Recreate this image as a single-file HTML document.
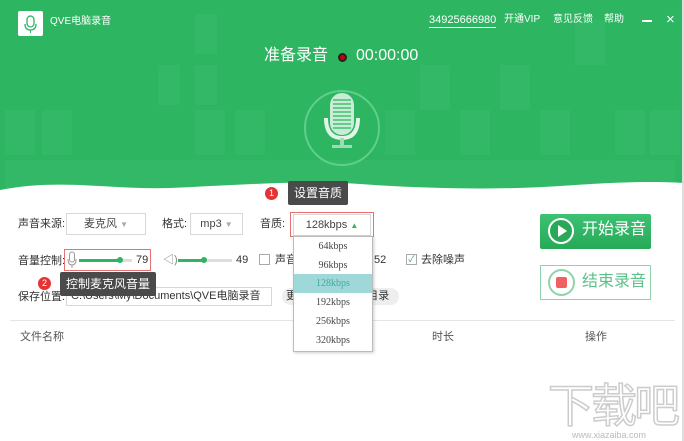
<!DOCTYPE html>
<html><head><meta charset="utf-8"><style>
*{margin:0;padding:0;box-sizing:border-box}
body{width:684px;height:441px;overflow:hidden;background:#fff;font-family:"Liberation Sans","Noto Sans CJK SC",sans-serif;font-size:11px;line-height:1.15;color:#333;position:relative}
.a{position:absolute;white-space:nowrap}
.hdr{left:0;top:0;width:684px;height:200px;background:#2db562;overflow:hidden}
.dd{border:1px solid #d8d8d8;background:#fff;height:22px;line-height:20px;text-align:center;color:#444}
.tip{background:#4a4a4a;color:#fff;font-size:12px;line-height:24px;padding:0 6px;border-radius:2px}
.num{width:13px;height:13px;border-radius:50%;background:#e53333;color:#fff;font-size:9px;text-align:center;line-height:13px}
.li{left:0;width:78px;height:19px;line-height:19px;text-align:center;font-family:"Liberation Serif","DejaVu Serif",serif;font-size:10px;color:#444}
</style></head><body>
<div class="a hdr">
<svg class="a" style="left:0;top:0" width="684" height="200">
<g fill="#3bbd6e" opacity=".4">
<rect x="195" y="14" width="22" height="40"/><rect x="158" y="65" width="22" height="40"/><rect x="195" y="65" width="22" height="40"/>
<rect x="5" y="110" width="30" height="45"/><rect x="42" y="110" width="30" height="45"/><rect x="195" y="110" width="30" height="45"/><rect x="235" y="110" width="30" height="45"/>
<rect x="385" y="110" width="30" height="45"/><rect x="420" y="65" width="30" height="45"/><rect x="460" y="110" width="30" height="45"/><rect x="500" y="65" width="30" height="45"/><rect x="540" y="110" width="30" height="45"/><rect x="575" y="20" width="30" height="45"/><rect x="615" y="110" width="30" height="45"/><rect x="650" y="110" width="30" height="45"/>
<rect x="5" y="160" width="670" height="40"/>
</g>
<path d="M0 200 L0 190 C60 178 110 190 170 188 C240 185 300 180 360 184 C430 189 500 190 560 186 C620 182 650 181 684 183 L684 200Z" fill="#fff"/>
<circle cx="342" cy="128" r="37" fill="none" stroke="#5fcf8d" stroke-width="2"/>
<rect x="330" y="93" width="24" height="42" rx="12" fill="#c8ecd6"/>
<g stroke="#2db562" stroke-width="1.2"><line x1="333" y1="100" x2="351" y2="100"/><line x1="333" y1="104" x2="351" y2="104"/><line x1="333" y1="108" x2="351" y2="108"/><line x1="333" y1="112" x2="351" y2="112"/><line x1="333" y1="116" x2="351" y2="116"/><line x1="333" y1="120" x2="351" y2="120"/><line x1="333" y1="124" x2="351" y2="124"/><line x1="333" y1="128" x2="351" y2="128"/></g>
<path d="M326 118 Q326 138 342 138 Q358 138 358 118" fill="none" stroke="#e0f5e8" stroke-width="4"/>
<rect x="340" y="138" width="4" height="8" fill="#9fdcb6"/><rect x="332" y="145" width="20" height="3" fill="#9fdcb6"/>
</svg>
<div class="a" style="left:18px;top:11px;width:25px;height:25px;background:#fff;border-radius:2px"></div>
<svg class="a" style="left:18px;top:11px" width="25" height="25"><rect x="9" y="5" width="7" height="11" rx="3.5" fill="none" stroke="#2db562" stroke-width="1.3"/><path d="M7 13 Q7 19 12.5 19 Q18 19 18 13" fill="none" stroke="#2db562" stroke-width="1.3"/><line x1="12.5" y1="19" x2="12.5" y2="22" stroke="#2db562"/></svg>
<div class="a" style="left:50px;top:16px;color:#fff;font-size:10px">QVE电脑录音</div>
<div class="a" style="left:429px;top:14px;color:#fff;font-size:11px;border-bottom:1px solid #fff">34925666980</div>
<div class="a" style="left:504px;top:14px;color:#fff;font-size:10px">开通VIP</div>
<div class="a" style="left:553px;top:14px;color:#fff;font-size:10px">意见反馈</div>
<div class="a" style="left:604px;top:14px;color:#fff;font-size:10px">帮助</div>
<div class="a" style="left:642px;top:20px;width:10px;height:2px;background:#fff"></div>
<div class="a" style="left:666px;top:11px;color:#fff;font-size:15px">×</div>
<div class="a" style="left:264px;top:47px;color:#fff;font-size:16px">准备录音</div>
<div class="a" style="left:338px;top:53px;width:9px;height:9px;border-radius:50%;background:#c00;border:2px solid #222"></div>
<div class="a" style="left:356px;top:47px;color:#fff;font-size:16px">00:00:00</div>
</div>
<div class="a num" style="left:265px;top:187px">1</div>
<div class="a tip" style="left:288px;top:181px">设置音质</div>
<div class="a" style="left:18px;top:218px">声音来源:</div>
<div class="a dd" style="left:66px;top:213px;width:80px">麦克风 <span style="color:#aaa;font-size:8px">▼</span></div>
<div class="a" style="left:162px;top:218px">格式:</div>
<div class="a dd" style="left:190px;top:213px;width:53px">mp3 <span style="color:#aaa;font-size:8px">▼</span></div>
<div class="a" style="left:260px;top:218px">音质:</div>
<div class="a" style="left:290px;top:212px;width:84px;height:25px;border:1px solid #e87070"></div>
<div class="a dd" style="left:293px;top:214px;width:78px">128kbps <span style="color:#2db562;font-size:8px">▲</span></div>
<div class="a" style="left:18px;top:255px">音量控制:</div>
<div class="a" style="left:64px;top:249px;width:87px;height:22px;border:1px solid #e87070"></div>
<svg class="a" style="left:66px;top:251px" width="12" height="18"><rect x="3.5" y="1" width="5" height="10" rx="2.5" fill="none" stroke="#999"/><path d="M2 8 Q2 14 6 14 Q10 14 10 8 M6 14V17" fill="none" stroke="#999"/></svg>
<div class="a" style="left:79px;top:259px;width:40px;height:3px;background:#2db562"></div>
<div class="a" style="left:119px;top:259px;width:13px;height:3px;background:#ddd"></div>
<div class="a" style="left:117px;top:257px;width:6px;height:6px;border-radius:50%;background:#2db562"></div>
<div class="a" style="left:136px;top:254px;font-size:11px">79</div>
<div class="a" style="left:163px;top:254px;color:#888">◁)</div>
<div class="a" style="left:178px;top:259px;width:26px;height:3px;background:#2db562"></div>
<div class="a" style="left:204px;top:259px;width:28px;height:3px;background:#ddd"></div>
<div class="a" style="left:201px;top:257px;width:6px;height:6px;border-radius:50%;background:#2db562"></div>
<div class="a" style="left:236px;top:254px">49</div>
<div class="a" style="left:259px;top:254px;width:11px;height:11px;border:1px solid #aaa"></div>
<div class="a" style="left:275px;top:254px">声音</div>
<div class="a" style="left:374px;top:254px">52</div>
<div class="a" style="left:406px;top:254px;width:11px;height:11px;border:1px solid #aaa;color:#2db562;font-size:9px;line-height:9px;text-align:center">✓</div>
<div class="a" style="left:421px;top:254px">去除噪声</div>
<div class="a" style="left:18px;top:291px">保存位置:</div>
<div class="a" style="left:66px;top:287px;width:206px;height:19px;border:1px solid #d8d8d8;line-height:17px;padding-left:4px">C:\Users\My\Documents\QVE电脑录音</div>
<div class="a" style="left:282px;top:288px;width:117px;height:17px;border-radius:9px;background:#eee;line-height:17px;padding-left:4px">更 &nbsp; &nbsp; &nbsp; &nbsp; &nbsp; &nbsp; &nbsp; &nbsp; &nbsp; &nbsp; &nbsp; 目录</div>
<div class="a num" style="left:38px;top:277px">2</div>
<div class="a tip" style="left:60px;top:272px">控制麦克风音量</div>
<div class="a" style="left:10px;top:320px;width:665px;height:1px;background:#e5e5e5"></div>
<div class="a" style="left:20px;top:331px;color:#555">文件名称</div>
<div class="a" style="left:432px;top:331px;color:#555">时长</div>
<div class="a" style="left:585px;top:331px;color:#555">操作</div>
<div class="a" style="left:293px;top:236px;width:80px;height:116px;background:#fff;border:1px solid #bbb;box-shadow:1px 1px 3px rgba(0,0,0,.2)">
<div class="a li" style="top:0">64kbps</div><div class="a li" style="top:19px">96kbps</div><div class="a li" style="top:37px;background:#9fd8d8;color:#4a9">128kbps</div><div class="a li" style="top:56px">192kbps</div><div class="a li" style="top:75px">256kbps</div><div class="a li" style="top:94px">320kbps</div></div>
<div class="a" style="left:540px;top:214px;width:111px;height:35px;background:linear-gradient(#3cc273,#27a957);border-radius:2px"></div>
<div class="a" style="left:548px;top:218px;width:26px;height:26px;border-radius:50%;border:2px solid #fff;background:#2aa85a"></div>
<div class="a" style="left:558px;top:225px;width:0;height:0;border-left:9px solid #fff;border-top:6px solid transparent;border-bottom:6px solid transparent"></div>
<div class="a" style="left:582px;top:221px;color:#fff;font-size:16px">开始录音</div>
<div class="a" style="left:540px;top:265px;width:111px;height:35px;border:1px solid #8fd3aa;background:#fff"></div>
<div class="a" style="left:548px;top:269px;width:27px;height:27px;border-radius:50%;border:2px solid #8fd3aa"></div>
<div class="a" style="left:556px;top:277px;width:11px;height:11px;border-radius:2px;background:#f06060"></div>
<div class="a" style="left:582px;top:273px;color:#5cc08a;font-size:16px">结束录音</div>
<div class="a" style="left:548px;top:378px;font-size:46px;color:#fff;-webkit-text-stroke:1.5px #ccc;letter-spacing:-3px;font-family:'Noto Sans CJK SC',sans-serif;line-height:50px">下载吧</div>
<div class="a" style="left:572px;top:430px;font-size:9px;color:#bbb">www.xiazaiba.com</div>
<div class="a" style="left:682px;top:0;width:2px;height:441px;background:#ddd"></div>
</body></html>
